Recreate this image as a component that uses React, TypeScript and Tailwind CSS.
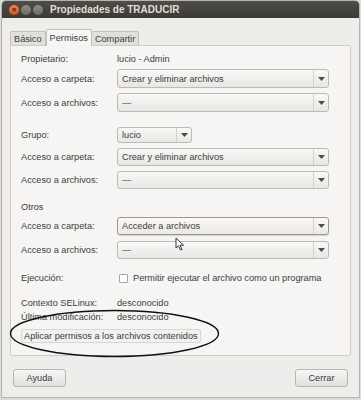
import React from 'react'

const font = { fontFamily: '"Liberation Sans", Arial, sans-serif' }

function Arrow() {
  return (
    <svg width="7" height="4" viewBox="0 0 7 4" className="block">
      <path d="M0 0 L7 0 L3.5 4 Z" fill="#4c4c4c" />
    </svg>
  )
}

function Combo({ value, width = 'w-[212px]', h = 'h-[19px]', focused = false }: { value: string; width?: string; h?: string; focused?: boolean }) {
  return (
    <div
      className={`${width} ${h} flex items-center rounded-[3px] border ${
        focused
          ? 'border-[#9d968d] bg-gradient-to-b from-[#faf9f8] to-[#ebe9e6] shadow-[0_1px_1px_rgba(0,0,0,0.15)]'
          : 'border-[#bdbab5] bg-gradient-to-b from-[#f8f8f7] to-[#e8e7e5]'
      }`}
    >
      <span className="flex-1 pl-[4px] text-[#3c3c3c] truncate">{value}</span>
      <span className="h-full border-l border-[#d2d0cc] w-[15px] flex items-center justify-center">
        <Arrow />
      </span>
    </div>
  )
}

function Label({ children }: { children: React.ReactNode }) {
  return <div className="w-[96px] shrink-0 text-[#3c3c3c]">{children}</div>
}

export default function App() {
  return (
    <div className="w-[361px] h-[400px] bg-[#dcdbd8] text-[9.2px] leading-[14px] overflow-hidden" style={font}>
      <div className="h-[398px] mx-[1px] bg-[#eeedeb] rounded-t-[5px] border border-[#b7b4af] flex flex-col overflow-hidden relative">
        {/* title bar */}
        <div className="h-[17px] shrink-0 bg-gradient-to-b from-[#4e4d48] to-[#3b3a36] flex items-center pl-[7px]">
          <div className="flex items-center gap-[2px]">
            <span className="w-[10px] h-[10px] rounded-full bg-gradient-to-b from-[#f2804f] to-[#d9501b] flex items-center justify-center text-[#3a2010] text-[8px] leading-none font-bold">×</span>
            <span className="w-[10px] h-[10px] rounded-full bg-gradient-to-b from-[#8e8c86] to-[#6c6a65]" />
            <span className="w-[10px] h-[10px] rounded-full bg-gradient-to-b from-[#8e8c86] to-[#6c6a65]" />
          </div>
          <span className="ml-[7px] font-bold text-[#e2ded6] text-[10px]">Propiedades de TRADUCIR</span>
        </div>

        {/* tabs */}
        <div className="flex items-end pl-[8px] mt-[10px] h-[17px] text-[#3c3c3c]">
          <div className="h-[14px] px-[3px] border border-b-0 border-[#c3c0bb] bg-[#e2e0dd] rounded-t-[2px] flex items-center">Básico</div>
          <div className="h-[17px] px-[3px] border border-b-0 border-[#c3c0bb] bg-[#f6f5f4] rounded-t-[2px] flex items-center relative top-[1px] z-10">Permisos</div>
          <div className="h-[14px] px-[3px] border border-b-0 border-l-0 border-[#c3c0bb] bg-[#e2e0dd] rounded-t-[2px] flex items-center">Compartir</div>
        </div>

        {/* panel */}
        <div className="ml-[8px] w-[341px] h-[311px] bg-[#f6f5f4] border border-[#cfccc7] rounded-[2px] pl-[10px] pt-[6px] flex flex-col">
          <div className="flex items-center h-[14px]">
            <Label>Propietario:</Label>
            <span className="text-[#3c3c3c]">lucio - Admin</span>
          </div>
          <div className="flex items-center mt-[3px]">
            <Label>Acceso a carpeta:</Label>
            <Combo value="Crear y eliminar archivos" />
          </div>
          <div className="flex items-center mt-[5px]">
            <Label>Acceso a archivos:</Label>
            <Combo value="—" />
          </div>

          <div className="flex items-center mt-[15px]">
            <Label>Grupo:</Label>
            <Combo value="lucio" width="w-[75px]" h="h-[16px]" />
          </div>
          <div className="flex items-center mt-[5px]">
            <Label>Acceso a carpeta:</Label>
            <Combo value="Crear y eliminar archivos" h="h-[18px]" />
          </div>
          <div className="flex items-center mt-[5px]">
            <Label>Acceso a archivos:</Label>
            <Combo value="—" h="h-[18px]" />
          </div>

          <div className="mt-[11px] h-[14px] text-[#3c3c3c]">Otros</div>
          <div className="flex items-center mt-[3px]">
            <Label>Acceso a carpeta:</Label>
            <Combo value="Acceder a archivos" h="h-[18px]" focused />
          </div>
          <div className="flex items-center mt-[6px]">
            <Label>Acceso a archivos:</Label>
            <Combo value="—" h="h-[18px]" />
          </div>

          <div className="flex items-center mt-[12px] h-[14px]">
            <Label>Ejecución:</Label>
            <span className="w-[9px] h-[9px] border border-[#a9a6a1] bg-white rounded-[1px] mr-[5px] ml-[2px]" />
            <span className="text-[#3c3c3c]">Permitir ejecutar el archivo como un programa</span>
          </div>

          <div className="flex items-center mt-[11px] h-[14px]">
            <Label>Contexto SELinux:</Label>
            <span className="text-[#3c3c3c]">desconocido</span>
          </div>
          <div className="flex items-center h-[14px]">
            <Label>Última modificación:</Label>
            <span className="text-[#3c3c3c]">desconocido</span>
          </div>
          <div className="mt-[5px]">
            <span className="inline-flex items-center h-[14px] px-[2px] border border-[#d8d6d2] bg-[#f2f1ef] text-[#3c3c3c] rounded-[2px]">
              Aplicar permisos a los archivos contenidos
            </span>
          </div>
        </div>

        {/* footer buttons */}
        <div className="flex justify-between px-[11px] mt-[13px]">
          <div className="w-[53px] h-[18px] rounded-[3px] border border-[#b9b6b1] bg-gradient-to-b from-[#f6f6f5] to-[#e1e0dd] flex items-center justify-center text-[#3c3c3c]">Ayuda</div>
          <div className="w-[53px] h-[18px] rounded-[3px] border border-[#b9b6b1] bg-gradient-to-b from-[#f6f6f5] to-[#e1e0dd] flex items-center justify-center text-[#3c3c3c]">Cerrar</div>
        </div>

        {/* hand-drawn ellipse annotation */}
        <svg className="absolute pointer-events-none" width="361" height="400" style={{ left: -2, top: -1 }}>
          <ellipse cx="114.5" cy="333.5" rx="104" ry="23" fill="none" stroke="#111" strokeWidth="1.4" />
        </svg>

        {/* mouse pointer */}
        <svg className="absolute pointer-events-none" width="10" height="14" viewBox="0 0 10 14" style={{ left: 173, top: 236 }}>
          <path d="M1 1 L1 11 L3.5 8.8 L5.5 13 L7 12.3 L5 8.2 L8.5 8.2 Z" fill="#fff" stroke="#222" strokeWidth="0.9" strokeLinejoin="round" />
        </svg>
      </div>
    </div>
  )
}
